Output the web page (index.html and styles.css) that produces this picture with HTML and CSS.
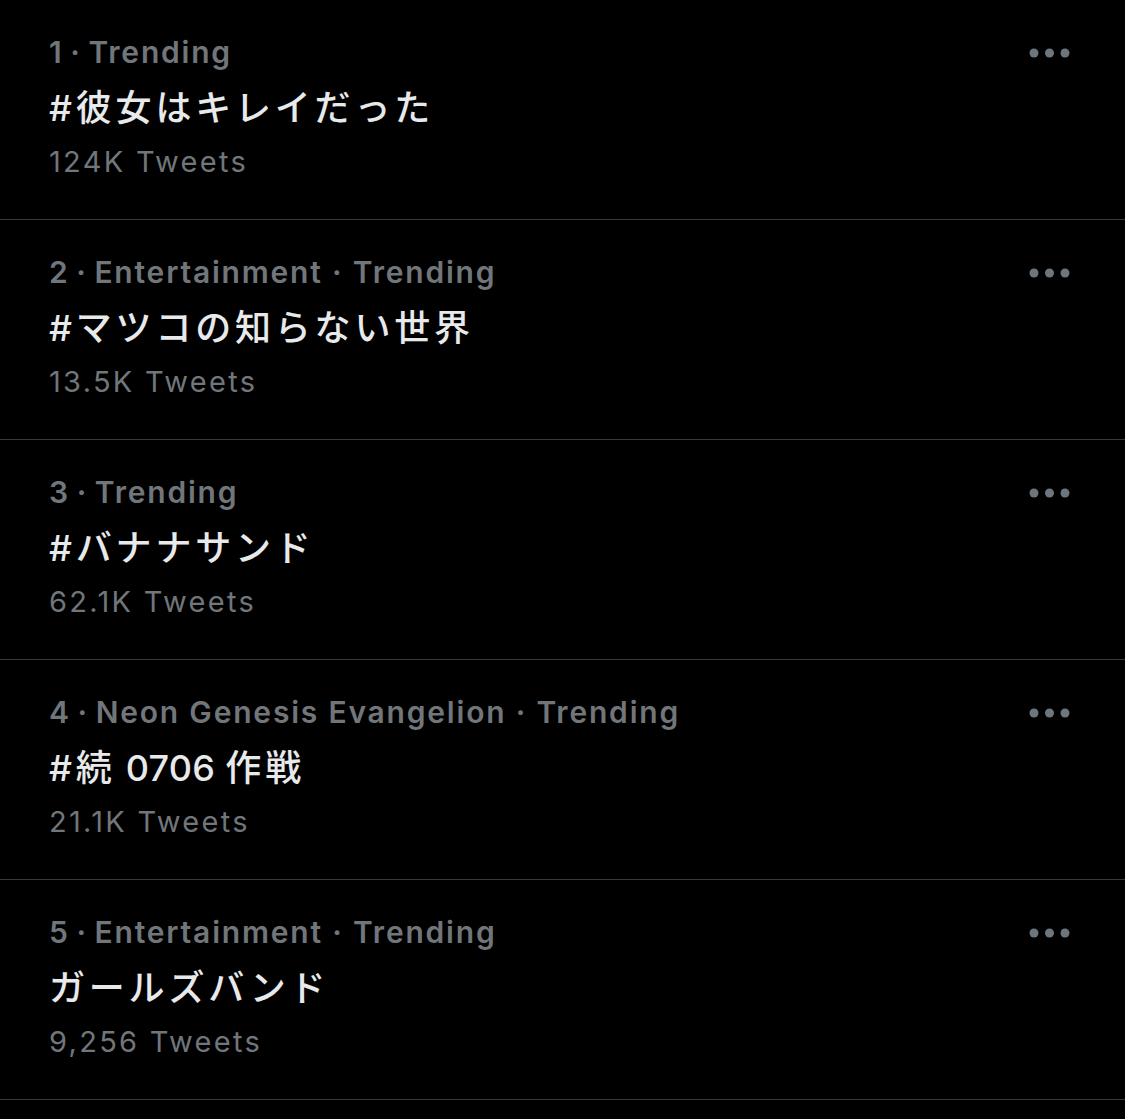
FILE: index.html
```html
<!DOCTYPE html>
<html lang="ja">
<head>
<meta charset="utf-8">
<link rel="stylesheet" href="styles.css">
</head>
<body>
<ul class="trends">
  <li class="trend">
    <div class="info">
      <div class="meta">1&#8201;·&#8201;Trending</div>
      <div class="title">#彼女はキレイだった</div>
      <div class="count">124K Tweets</div>
    </div>
    <svg class="more" width="41" height="10" viewBox="0 0 41 10"><circle cx="5" cy="5" r="4.5"/><circle cx="20.5" cy="5" r="4.5"/><circle cx="36" cy="5" r="4.5"/></svg>
  </li>
  <li class="trend">
    <div class="info">
      <div class="meta">2&#8201;·&#8201;Entertainment · Trending</div>
      <div class="title">#マツコの知らない世界</div>
      <div class="count">13.5K Tweets</div>
    </div>
    <svg class="more" width="41" height="10" viewBox="0 0 41 10"><circle cx="5" cy="5" r="4.5"/><circle cx="20.5" cy="5" r="4.5"/><circle cx="36" cy="5" r="4.5"/></svg>
  </li>
  <li class="trend">
    <div class="info">
      <div class="meta">3&#8201;·&#8201;Trending</div>
      <div class="title">#バナナサンド</div>
      <div class="count">62.1K Tweets</div>
    </div>
    <svg class="more" width="41" height="10" viewBox="0 0 41 10"><circle cx="5" cy="5" r="4.5"/><circle cx="20.5" cy="5" r="4.5"/><circle cx="36" cy="5" r="4.5"/></svg>
  </li>
  <li class="trend">
    <div class="info">
      <div class="meta">4&#8201;·&#8201;Neon Genesis Evangelion · Trending</div>
      <div class="title">#続&#8201;<span class="num">0706</span>&#8201;作戦</div>
      <div class="count">21.1K Tweets</div>
    </div>
    <svg class="more" width="41" height="10" viewBox="0 0 41 10"><circle cx="5" cy="5" r="4.5"/><circle cx="20.5" cy="5" r="4.5"/><circle cx="36" cy="5" r="4.5"/></svg>
  </li>
  <li class="trend">
    <div class="info">
      <div class="meta">5&#8201;·&#8201;Entertainment · Trending</div>
      <div class="title">ガールズバンド</div>
      <div class="count">9,256 Tweets</div>
    </div>
    <svg class="more" width="41" height="10" viewBox="0 0 41 10"><circle cx="5" cy="5" r="4.5"/><circle cx="20.5" cy="5" r="4.5"/><circle cx="36" cy="5" r="4.5"/></svg>
  </li>
</ul>
</body>
</html>
```
FILE: styles.css
```css
html, body {
  margin: 0;
  padding: 0;
  background: #000;
}
body {
  font-family: Inter, "Noto Sans CJK JP", sans-serif;
  -webkit-font-smoothing: antialiased;
}
.trends {
  list-style: none;
  margin: 0;
  padding: 0;
}
.trend {
  display: flex;
  justify-content: space-between;
  align-items: flex-start;
  height: 219px;
  box-sizing: content-box;
  padding: 0 55px 0 49px;
  border-bottom: 1px solid #38393b;
}
.info {
  padding-top: 32px;
}
.meta {
  font-size: 30px;
  line-height: 40px;
  font-weight: 600;
  letter-spacing: 1.8px;
  color: #71767b;
  white-space: nowrap;
}
.title {
  margin-top: 11px;
  font-size: 36px;
  line-height: 50px;
  height: 50px;
  font-weight: 500;
  letter-spacing: 3.8px;
  color: #e7e9ea;
  white-space: nowrap;
}
.num {
  letter-spacing: 0.3px;
}
.count {
  margin-top: 9px;
  font-size: 29px;
  line-height: 40px;
  font-weight: 400;
  letter-spacing: 2.3px;
  color: #71767b;
}
.more {
  margin-top: 48px;
  fill: #6e767d;
  flex-shrink: 0;
}
```
